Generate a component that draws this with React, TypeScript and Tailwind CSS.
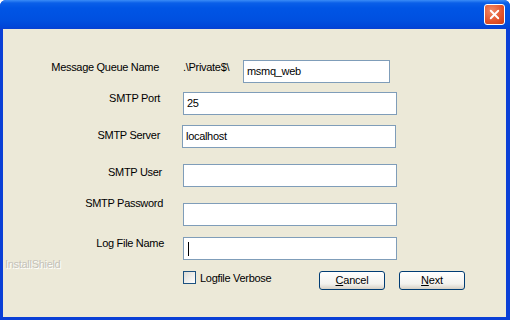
import { X } from "lucide-react";

const font = { fontFamily: '"Liberation Sans", Arial, sans-serif' };

function Field({ value, cursor, className }: { value?: string; cursor?: boolean; className: string }) {
  return (
    <div className={`h-[23px] shrink-0 border border-[#7f9db9] bg-white flex items-center pl-[3px] text-[11px] text-black ${className}`}>
      {value}
      {cursor && <span className="w-px h-[14px] bg-black ml-px" />}
    </div>
  );
}

function XpButton({ hot, rest }: { hot: string; rest: string }) {
  return (
    <button className="w-[66px] h-[19px] rounded-[3px] border border-[#003c74] bg-[linear-gradient(to_bottom,#ffffff,#f3f2ee_70%,#d6d0c5)] text-[11px] leading-none flex items-center justify-center tracking-[-0.2px]">
      <span>
        <span className="underline">{hot}</span>
        {rest}
      </span>
    </button>
  );
}

export default function App() {
  return (
    <div
      style={font}
      className="w-[510px] h-[320px] flex flex-col bg-[#0a3fd6] overflow-hidden rounded-t-[6px]"
    >
      {/* title bar */}
      <div className="h-[29px] shrink-0 flex items-center justify-end pr-[5px] bg-[linear-gradient(to_bottom,#3a8cf7_0px,#0a5fe8_3px,#0055e5_8px,#0050e0_20px,#0046d8_27px,#0a3fd0_29px)]">
        <div className="w-[21px] h-[21px] rounded-[3px] border border-white bg-[radial-gradient(circle_at_35%_30%,#f08a68,#e2532b_60%,#c83d16)] flex items-center justify-center">
          <X className="w-[15px] h-[15px] text-white" strokeWidth={3} />
        </div>
      </div>

      {/* body */}
      <div className="flex-1 ml-[3px] mr-[4px] mb-[3px] bg-[#ece9d8] text-[11px] text-black tracking-[-0.3px]">
        <div className="flex flex-col pt-[31px]">
          <div className="flex">
            <div className="w-[156px] text-right -mt-[1px]">Message Queue Name</div>
            <div className="ml-[24px] w-[60px] -mt-[1px]">.\Private$\</div>
            <Field value="msmq_web" className="w-[147px]" />
          </div>

          <div className="flex mt-[9px]">
            <div className="w-[157px] text-right -mt-[2px]">SMTP Port</div>
            <Field value="25" className="w-[214px] ml-[23px]" />
          </div>

          <div className="flex mt-[10px]">
            <div className="w-[157px] text-right pt-[2px]">SMTP Server</div>
            <Field value="localhost" className="w-[214px] ml-[22px]" />
          </div>

          <div className="flex mt-[16px]">
            <div className="w-[159px] text-right">SMTP User</div>
            <Field className="w-[214px] ml-[21px]" />
          </div>

          <div className="flex mt-[16px]">
            <div className="w-[160px] text-right -mt-[8px]">SMTP Password</div>
            <Field className="w-[214px] ml-[20px]" />
          </div>

          <div className="flex mt-[11px]">
            <div className="w-[161px] text-right -mt-[2px]">Log File Name</div>
            <Field cursor className="w-[214px] ml-[19px]" />
          </div>

          <div className="flex items-start mt-[11px]">
            <div className="w-[180px] -mt-[15px] pl-[2px]">
              <span className="text-[#c4c2b8] [text-shadow:1px_1px_0_#ffffff]">InstallShield</span>
            </div>
            <div className="w-[13px] h-[13px] border border-[#1c5180] bg-[linear-gradient(135deg,#dcdbd5,#ffffff)]" />
            <span className="ml-[4px] -mt-[1px]">Logfile Verbose</span>
            <div className="ml-auto mr-[41px] flex gap-[14px]">
              <XpButton hot="C" rest="ancel" />
              <XpButton hot="N" rest="ext" />
            </div>
          </div>
        </div>
      </div>
    </div>
  );
}
